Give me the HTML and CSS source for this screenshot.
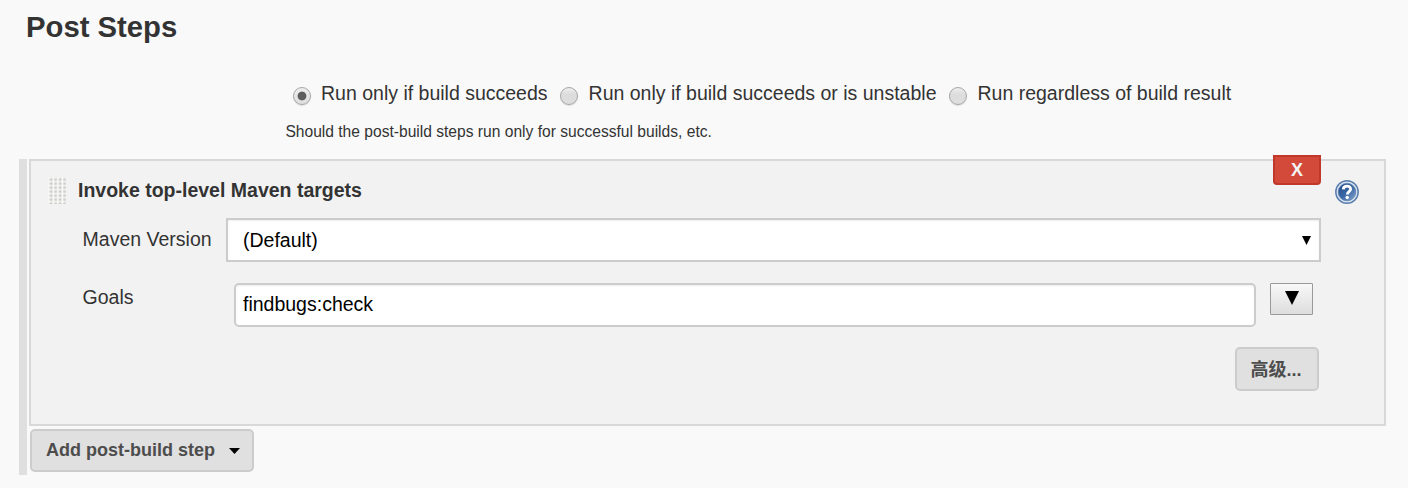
FILE: index.html
```
<!DOCTYPE html>
<html lang="en">
<head>
<meta charset="utf-8">
<title>Post Steps</title>
<link rel="stylesheet" href="styles.css">
</head>
<body>
<main class="page">
  <h1 class="title">Post Steps</h1>
  <div class="options">
    <label class="option option-first"><span class="radio checked"></span><span>Run only if build succeeds</span></label>
    <label class="option option-second"><span class="radio"></span><span>Run only if build succeeds or is unstable</span></label>
    <label class="option"><span class="radio"></span><span>Run regardless of build result</span></label>
  </div>
  <p class="description">Should the post-build steps run only for successful builds, etc.</p>
  <section class="steps">
    <div class="step">
      <header class="step-head">
        <svg class="grip" width="18" height="27" viewBox="0 0 18 27">
          <defs>
            <linearGradient id="dot" x1="0" y1="0" x2="1" y2="1"><stop offset="0" stop-color="#eeeeec"/><stop offset="1" stop-color="#b4b4b0"/></linearGradient>
            <pattern id="dots" x="0.4" y="0.4" width="4.5" height="4" patternUnits="userSpaceOnUse"><rect x="1" y="0.6" width="3" height="2.8" fill="url(#dot)"/></pattern>
          </defs>
          <rect width="18" height="27" fill="#fcfcfc"/>
          <rect width="18" height="27" fill="url(#dots)"/>
        </svg>
        <h2 class="step-title">Invoke top-level Maven targets</h2>
        <button class="delete">X</button>
        <svg class="help" width="24" height="24" viewBox="0 0 24 24">
          <defs><linearGradient id="blue" x1="0" y1="0" x2="1" y2="1"><stop offset="0" stop-color="#234c88"/><stop offset="0.5" stop-color="#3a67a5"/><stop offset="1" stop-color="#8ba9d0"/></linearGradient></defs>
          <circle cx="12" cy="12" r="11.2" fill="#dde6f0" stroke="#5a7eae" stroke-width="1.5"/>
          <circle cx="12" cy="12" r="8.8" fill="url(#blue)" stroke="#5f84b5" stroke-width="0.8"/>
          <path d="M8.3 9.4C8.4 5.1 15.8 5.2 15.6 9.2C15.5 11.6 12.3 11.6 12.3 14.4" fill="none" stroke="#fff" stroke-width="2.8"/>
          <circle cx="12.2" cy="17.5" r="1.7" fill="#fff"/>
        </svg>
      </header>
      <div class="row version-row">
        <span class="label">Maven Version</span>
        <div class="select"><span>(Default)</span><svg width="9" height="9" viewBox="0 0 9 9"><path d="M0 0H9L4.5 9Z"/></svg></div>
      </div>
      <div class="row goals-row">
        <span class="label">Goals</span>
        <div class="input">findbugs:check</div>
        <button class="expand"><svg width="14" height="14" viewBox="0 0 14 14"><path d="M0 0H14L7 14Z"/></svg></button>
      </div>
      <div class="actions"><button class="button advanced">高级...</button></div>
    </div>
    <button class="button add"><span>Add post-build step</span><svg width="11" height="6" viewBox="0 0 11 6"><path d="M0 0H11L5.5 6Z"/></svg></button>
  </section>
</main>
</body>
</html>
```
FILE: styles.css
```
* { box-sizing: border-box; }
body {
  margin: 0;
  background: #f9f9f9;
  color: #333;
  font: 19.5px/24px "Liberation Sans", "Noto Sans CJK SC", sans-serif;
}
button { font: inherit; margin: 0; padding: 0; }
svg { display: block; flex: none; }
.page { height: 488px; padding: 9px 22px 0 19px; overflow: hidden; }
.title { margin: 0 0 0 7px; height: 72px; font-size: 29.25px; line-height: 36px; font-weight: 700; }
.options { display: flex; margin-left: 274px; height: 42px; white-space: nowrap; }
.option { display: flex; gap: 10px; }
.option-first, .option-second { margin-right: 12px; }
.option + .option { gap: 11px; }
.option-second { margin-right: 12px; }
.radio {
  width: 18px;
  height: 18px;
  margin-top: 6px;
  border: 1px solid #a7a7a7;
  border-radius: 50%;
  background: linear-gradient(#eee, #dcdcdc 40%, #dedede);
  box-shadow: 0 1px 1px #ddd;
}
.checked { background: radial-gradient(circle, #5e5e5e 0 4px, transparent 4.8px), linear-gradient(#eee, #dedede); }
.description { margin: 0 0 0 266.4px; height: 36px; font-size: 15.6px; line-height: 17px; white-space: nowrap; }
.steps { height: 316px; padding-left: 2px; border-left: 8px solid #dfdfdf; }
.step { height: 267px; border: 2px solid #d8d8d8; background: #f2f2f2; padding: 0 25px 0 17px; }
.step-head { display: flex; height: 57px; }
.grip { margin-top: 16px; }
.step-title { flex: 1; margin: 17px 0 0 12px; font-size: 19.5px; line-height: 24px; font-weight: 700; }
.delete {
  width: 48px;
  height: 30px;
  margin-top: -6px;
  border: 2px solid #bf382a;
  border-radius: 0 0 4px 4px;
  background: #d34a3a;
  color: #f4f4f4;
  font-weight: 700;
  font-size: 18px;
  line-height: 26px;
}
.help { margin: 19px 0 0 14px; }
.row { display: flex; padding-left: 34.6px; }
.label { flex: none; white-space: nowrap; }
.version-row { height: 65px; padding-right: 38px; }
.version-row .label { width: 143.4px; padding-top: 9px; }
.select {
  display: flex;
  flex: 1;
  align-items: center;
  justify-content: space-between;
  height: 44px;
  padding: 0 8px 0 15px;
  border: 2px solid #ccc;
  background: #fff;
  color: #000;
  box-shadow: inset 0 1px 2px #eee;
}
.goals-row { height: 64px; padding-right: 46px; }
.goals-row .label { width: 151.4px; padding-top: 2px; }
.input {
  flex: 1;
  height: 44px;
  padding: 7px;
  border: 2px solid #ccc;
  border-radius: 5px;
  background: #fff;
  color: #000;
  box-shadow: inset 0 1px 2px #eee;
}
.expand {
  display: flex;
  justify-content: center;
  width: 43px;
  height: 32px;
  margin-left: 14px;
  padding-top: 7px;
  border: 1px solid #999;
  border-radius: 1px;
  background: linear-gradient(#f8f8f8, #ddd);
}
.actions { display: flex; justify-content: flex-end; padding-right: 40px; }
.button { border: 2px solid #ccc; border-radius: 5px; background: #e0e0e0; color: #4d4d4d; font-weight: 700; }
.advanced { width: 84px; height: 44px; padding: 1px 2px 0 0; font-size: 18px; }
.add { display: flex; align-items: center; gap: 14px; width: 224px; height: 43px; margin: 3px 0 0 1px; padding-left: 14px; font-size: 18px; white-space: nowrap; }
.add span { padding-bottom: 2px; }
```
